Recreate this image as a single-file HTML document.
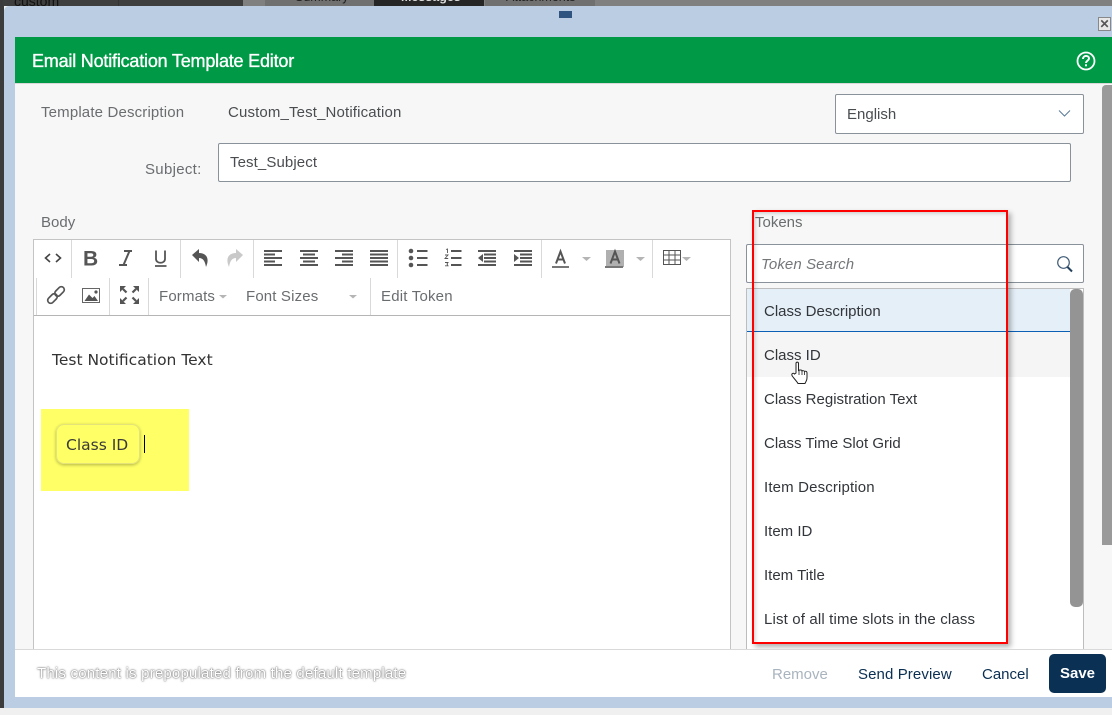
<!DOCTYPE html>
<html><head><meta charset="utf-8">
<style>
html,body{margin:0;padding:0}
body{width:1112px;height:715px;position:relative;overflow:hidden;background:#f0f0f0;font-family:"Liberation Sans",sans-serif;}
.a{position:absolute;white-space:nowrap}
.t{position:absolute;white-space:nowrap;font-size:15px;line-height:18px;color:#32363a}
.g{color:#6a6d70}
.sep{position:absolute;width:1px;background:#d9d9d9}
.ic{position:absolute;overflow:visible}
</style></head><body>
<!-- backdrop -->
<div class="a" style="left:0;top:0;width:1112px;height:6px;background:#808080;overflow:hidden">
 <div class="a" style="left:0;top:0;width:3px;height:6px;background:#3c3c3c"></div>
 <div class="a" style="left:3px;top:0;width:240px;height:6px;background:#3e3e3e"></div>
 <div class="a" style="left:14px;top:-8px;font-size:14px;line-height:18px;color:#111">custom</div>
 <div class="a" style="left:118px;top:0;width:1px;height:6px;background:#333"></div>
 <div class="a" style="left:265px;top:0;width:109px;height:6px;background:#707070"><span class="a" style="left:30px;top:-12px;font-size:12.500px;line-height:18px;color:#222">Summary</span></div>
 <div class="a" style="left:374px;top:0;width:110px;height:6px;background:#262626"><span class="a" style="left:27px;top:-12px;font-size:12.500px;font-weight:bold;line-height:18px;color:#ddd">Messages</span></div>
 <div class="a" style="left:485px;top:0;width:110px;height:6px;background:#707070"><span class="a" style="left:21px;top:-12px;font-size:12.500px;line-height:18px;color:#222">Attachments</span></div>
</div>
<div class="a" style="left:0;top:6px;width:4px;height:702px;background:#3c3c3c"></div>
<!-- dialog frame -->
<div class="a" style="left:4px;top:6px;width:1108px;height:702px;background:#bbcde2;border-top-left-radius:5px"></div>
<div class="a" style="left:559px;top:11px;width:13px;height:7px;background:#2f5480"></div>
<div class="a" style="left:1098px;top:17px;width:13px;height:14px;background:#e8e8e8;border:1px solid #888;box-sizing:border-box;color:#555;font:bold 12px/12px 'Liberation Sans';text-align:center">✕</div>
<!-- content -->
<div class="a" style="left:15px;top:84px;width:1097px;height:566px;background:#f7f7f7"></div>
<div class="a" style="left:15px;top:37px;width:1097px;height:46px;background:#009a47"></div>
<div class="a" style="left:15px;top:83px;width:1097px;height:1px;background:#d9d9d9"></div>
<div class="a" style="left:32px;top:50px;font-size:18px;line-height:22px;color:#fff;font-weight:400;letter-spacing:-.2px;-webkit-text-stroke:.35px #fff">Email Notification Template Editor</div>
<svg class="ic" style="left:1076px;top:51px" width="20" height="20" viewBox="0 0 20 20"><circle cx="10" cy="10" r="8.500" fill="none" stroke="#fff" stroke-width="1.800"/><path d="M7 8c0-4 6-4 6-.6 0 2.200-3 2.200-3 4.600" fill="none" stroke="#fff" stroke-width="1.900"/><rect x="9" y="13.300" width="2" height="2" fill="#fff"/></svg>

<div class="t g" style="left:41px;top:104px;letter-spacing:.16px">Template Description</div>
<div class="t" style="left:228px;top:104px;color:#4a4d50;letter-spacing:.14px">Custom_Test_Notification</div>
<div class="a" style="left:835px;top:94px;width:249px;height:40px;box-sizing:border-box;background:#fff;border:1px solid #89919a;border-radius:2px"></div>
<div class="t" style="left:847px;top:106px;color:#4a4d50">English</div>
<svg class="ic" style="left:1058px;top:109px" width="13" height="9"><path d="M1 1.500l5.500 5.500 5.500-5.500" fill="none" stroke="#5a7a9a" stroke-width="1"/></svg>
<div class="t g" style="left:145px;top:161px;letter-spacing:.3px">Subject:</div>
<div class="a" style="left:218px;top:143px;width:853px;height:39px;box-sizing:border-box;background:#fff;border:1px solid #89919a;border-radius:2px"></div>
<div class="t" style="left:230px;top:154px;color:#4a4d50;letter-spacing:.1px">Test_Subject</div>
<div class="t g" style="left:41px;top:214px">Body</div>

<!-- editor -->
<div class="a" style="left:33px;top:239px;width:698px;height:411px;box-sizing:border-box;background:#fff;border:1px solid #c4c4c4;border-bottom:0"></div>
<div class="a" style="left:34px;top:315px;width:696px;height:1px;background:#b5b5b5"></div>
<div class="sep" style="left:71px;top:240px;height:38px"></div>
<div class="sep" style="left:180px;top:240px;height:38px"></div>
<div class="sep" style="left:253px;top:240px;height:38px"></div>
<div class="sep" style="left:397px;top:240px;height:38px"></div>
<div class="sep" style="left:541px;top:240px;height:38px"></div>
<div class="sep" style="left:652px;top:240px;height:38px"></div>
<div class="sep" style="left:36px;top:278px;height:37px"></div>
<div class="sep" style="left:109px;top:278px;height:37px"></div>
<div class="sep" style="left:148px;top:278px;height:37px"></div>
<div class="sep" style="left:370px;top:278px;height:37px"></div>

<svg class="ic" style="left:34px;top:240px" width="696" height="76" viewBox="34 240 696 76" fill="none">
 <path d="M50 254l-4.500 4 4.500 4M56 254l4.500 4-4.500 4" stroke="#444" stroke-width="1.600"/>
 <text x="83" y="265.500" font-family="Liberation Sans" font-weight="bold" font-size="21" fill="#555">B</text>
 <path d="M124 251h8M119 265h8M129.500 251l-6 14" stroke="#555" stroke-width="2"/>
 <path d="M156 250.500v8.500c0 5 9 5 9 0v-8.500M155 266h11.500" stroke="#555" stroke-width="1.800"/>
 <path d="M192 255l7-6v4C206 253 210 258 206 267C205 261 203 258 199 258v4z" fill="#555"/>
 <path d="M243 255l-7-6v4C229 253 225 258 229 267C230 261 232 258 236 258v4z" fill="#c9c9c9"/>
 <path d="M264 251h18M264 254.500h11M264 258h18M264 261.500h11M264 265h18" stroke="#555" stroke-width="2"/>
 <path d="M300 251h18M303 254.500h12M300 258h18M303 261.500h12M300 265h18" stroke="#555" stroke-width="2"/>
 <path d="M335 251h18M342 254.500h11M335 258h18M342 261.500h11M335 265h18" stroke="#555" stroke-width="2"/>
 <path d="M370 251h18M370 254.500h18M370 258h18M370 261.500h18M370 265h18" stroke="#555" stroke-width="2"/>
 <circle cx="411" cy="251" r="2.300" fill="#555"/><circle cx="411" cy="258" r="2.300" fill="#555"/><circle cx="411" cy="265" r="2.300" fill="#555"/>
 <path d="M417 251h10.500M417 258h10.500M417 265h10.500" stroke="#555" stroke-width="2"/>
 <path d="M451 251h10.500M451 258h10.500M451 265h10.500" stroke="#555" stroke-width="2"/>
 <path d="M446 249.500l1.500-.5v4M445 255h3l-3 3.500h3.200M445 262.500h3l-1 1.500 1 1.800h-3" stroke="#555" stroke-width=".9"/>
 <path d="M478 251h18M484 254.500h12M484 258h12M484 261.500h12M478 265h18" stroke="#555" stroke-width="2"/><path d="M483 254v8l-5-4z" fill="#555"/>
 <path d="M514 251h18M520 254.500h12M520 258h12M520 261.500h12M514 265h18" stroke="#555" stroke-width="2"/><path d="M514 254v8l5-4z" fill="#555"/>
 <path d="M556 263.500l4.500-12 4.500 12M557.500 259.500h6" stroke="#555" stroke-width="2"/>
 <rect x="552" y="266" width="17" height="2" fill="#777"/>
 <path d="M582 257h9l-4.500 4z M682 257h9l-4.500 4z" fill="#b5b5b5"/>
 <rect x="606" y="250" width="18" height="17" fill="#b0b0b0"/><rect x="605" y="266" width="18" height="2" fill="#777"/>
 <path d="M610.500 263.500l4.500-12 4.500 12M612 259.500h6" stroke="#555" stroke-width="2"/>
 <path d="M636 257h9l-4.500 4z" fill="#b5b5b5"/>
 <path d="M663.500 250.500h17v14h-17zM663.500 255h17M663.500 260h17M669 250.500v14M675 250.500v14" stroke="#555"/>
 <g stroke="#555" stroke-width="1.700" transform="rotate(-45 56 295)"><rect x="45.500" y="292" width="11" height="6" rx="3"/><rect x="55.500" y="292" width="11" height="6" rx="3"/></g>
 <rect x="82.500" y="288.500" width="17" height="14" stroke="#666"/>
 <path d="M84.500 301l4.500-6.500 3.500 3.500 2-2 3.500 5z" fill="#555"/><circle cx="96" cy="292" r="1.600" fill="#555"/>
 <path d="M120 286h6l-6 6zM139 286h-6l6 6zM120 304h6l-6-6zM139 304h-6l6-6z" fill="#555"/>
 <path d="M123 289l3.500 3.500M136 289l-3.500 3.500M123 301l3.500-3.500M136 301l-3.500-3.500" stroke="#555" stroke-width="2.200"/>
 <path d="M219 295h8l-4 3.500z M349 295h8l-4 3.500z" fill="#b5b5b5"/>
</svg>
<div class="t" style="left:159px;top:288px;color:#6a6d70;letter-spacing:.15px">Formats</div>
<div class="t" style="left:246px;top:288px;color:#6a6d70;letter-spacing:.15px">Font Sizes</div>
<div class="t" style="left:381px;top:288px;color:#6a6d70;letter-spacing:.2px">Edit Token</div>

<div class="a" style="left:52px;top:351px;font-family:'DejaVu Sans',sans-serif;font-size:15.500px;line-height:18px;color:#333">Test Notification Text</div>
<div class="a" style="left:41px;top:409px;width:148px;height:82px;background:#ffff66"></div>
<div class="a" style="left:56px;top:424px;width:84px;height:40px;box-sizing:border-box;border:1px solid #e3e37a;border-radius:8px;box-shadow:0 1px 3px rgba(0,0,0,.3);font-family:'DejaVu Sans',sans-serif;font-size:15.500px;line-height:40px;color:#3a3a3a;padding-left:9px">Class ID</div>
<div class="a" style="left:144px;top:435px;width:1px;height:18px;background:#000"></div>

<!-- tokens -->
<div class="t g" style="left:755px;top:214px">Tokens</div>
<div class="a" style="left:746px;top:244px;width:338px;height:39px;box-sizing:border-box;background:#fff;border:1px solid #89919a;border-radius:2px"></div>
<div class="t" style="left:761px;top:256px;color:#74777a;font-style:italic;letter-spacing:.1px">Token Search</div>
<svg class="ic" style="left:1056px;top:255px" width="18" height="18" fill="none"><circle cx="7.500" cy="7.500" r="5.800" stroke="#3f5b76" stroke-width="1.200"/><path d="M11.500 12l4.500 4.500" stroke="#24405c" stroke-width="2"/></svg>
<div class="a" style="left:746px;top:288px;width:338px;height:362px;box-sizing:border-box;background:#fff;border:1px solid #bdbdbd;border-bottom:0"></div>
<div class="a" style="left:747px;top:289px;width:323px;height:42px;background:#e5eff8"></div>
<div class="a" style="left:747px;top:331px;width:323px;height:1px;background:#0b60b5"></div>
<div class="a" style="left:747px;top:332px;width:323px;height:45px;background:#f5f5f5"></div>
<div class="a" style="left:1070px;top:289px;width:13px;height:318px;background:#949494;border-radius:5px"></div>
<div class="a" style="left:1102px;top:85px;width:10px;height:460px;background:#9a9a9a;border-top-left-radius:4px"></div>
<div class="t" style="left:764px;top:303px">Class Description</div>
<div class="t" style="left:764px;top:347px">Class ID</div>
<div class="t" style="left:764px;top:391px">Class Registration Text</div>
<div class="t" style="left:764px;top:435px">Class Time Slot Grid</div>
<div class="t" style="left:764px;top:479px;letter-spacing:.15px">Item Description</div>
<div class="t" style="left:764px;top:523px">Item ID</div>
<div class="t" style="left:764px;top:567px">Item Title</div>
<div class="t" style="left:764px;top:611px;letter-spacing:.15px">List of all time slots in the class</div>
<!-- red box -->
<div class="a" style="left:752px;top:210px;width:256px;height:434px;box-sizing:border-box;border:2px solid #f00;box-shadow:3px 3px 5px rgba(0,0,0,.3),inset 3px 3px 4px -2px rgba(0,0,0,.2)"></div>
<!-- hand cursor -->
<svg class="ic" style="left:790px;top:361px" width="20" height="24" viewBox="0 0 20 24"><path d="M6 12V2.500c0-1.800 2.500-1.800 2.500 0V9.500l1-.5 1 0c1 0 1.500.5 1.500 1 .5-.5 2-.5 2.500.5.500-.5 2.500-.5 2.500 1.500v5c0 2.500-1 3-2 5.500H8c-1-2-5-6-6-8-.8-2 1.500-3 2.500-1.500z" fill="#fff" stroke="#222" stroke-width="1"/><path d="M9 9v5M12 10v4M14.500 11v3" stroke="#222" stroke-width=".8"/></svg>

<!-- footer -->
<div class="a" style="left:15px;top:649px;width:1097px;height:1px;background:#d9d9d9"></div>
<div class="a" style="left:15px;top:650px;width:1097px;height:47px;background:#fff"></div>
<div class="t" style="left:37px;top:665px;color:#fff;letter-spacing:.2px;text-shadow:0 0 2px #666,0 0 1px #666">This content is prepopulated from the default template</div>
<div class="t" style="left:772px;top:666px;color:#a9b4be">Remove</div>
<div class="t" style="left:858px;top:666px;color:#0a2f52;letter-spacing:.1px">Send Preview</div>
<div class="t" style="left:982px;top:666px;color:#0a2f52">Cancel</div>
<div class="a" style="left:1049px;top:654px;width:57px;height:39px;background:#0a3054;border-radius:5px;color:#fff;font-weight:bold;font-size:15px;line-height:40px;text-align:center">Save</div>
</body></html>
